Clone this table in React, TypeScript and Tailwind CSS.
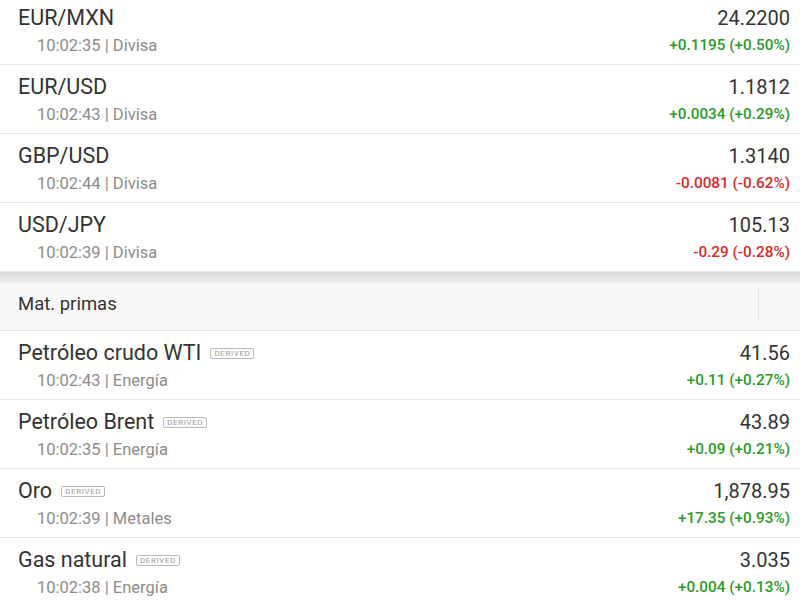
type Quote = {
  name: string;
  time: string;
  group: string;
  price: string;
  change: string;
  up: boolean;
  derived?: boolean;
};

const divisas: Quote[] = [
  { name: "EUR/MXN", time: "10:02:35", group: "Divisa", price: "24.2200", change: "+0.1195 (+0.50%)", up: true },
  { name: "EUR/USD", time: "10:02:43", group: "Divisa", price: "1.1812", change: "+0.0034 (+0.29%)", up: true },
  { name: "GBP/USD", time: "10:02:44", group: "Divisa", price: "1.3140", change: "-0.0081 (-0.62%)", up: false },
  { name: "USD/JPY", time: "10:02:39", group: "Divisa", price: "105.13", change: "-0.29 (-0.28%)", up: false },
];

const materias: Quote[] = [
  { name: "Petróleo crudo WTI", time: "10:02:43", group: "Energía", price: "41.56", change: "+0.11 (+0.27%)", up: true, derived: true },
  { name: "Petróleo Brent", time: "10:02:35", group: "Energía", price: "43.89", change: "+0.09 (+0.21%)", up: true, derived: true },
  { name: "Oro", time: "10:02:39", group: "Metales", price: "1,878.95", change: "+17.35 (+0.93%)", up: true, derived: true },
  { name: "Gas natural", time: "10:02:38", group: "Energía", price: "3.035", change: "+0.004 (+0.13%)", up: true, derived: true },
];

const QuoteRow = ({ q }: { q: Quote }) => (
  <div className="flex h-[69px] shrink-0 items-start justify-between border-b border-[#e9e9e9] bg-white pl-[18px] pr-[10px] pt-[8px]">
    <div className="flex flex-col">
      <div className="flex items-center gap-[9px]">
        <span className="text-[21.5px] leading-[28px] text-[#333333]">{q.name}</span>
        {q.derived ? (
          <span className="mt-[1px] rounded-[2px] border border-[#b8b8b8] px-[3px] text-[8px] leading-[9px] tracking-[0.6px] text-[#9a9a9a]">
            DERIVED
          </span>
        ) : null}
      </div>
      <span className="mt-[2px] pl-[19px] text-[16.5px] leading-[24px] text-[#8c8c8c]">
        {q.time} | {q.group}
      </span>
    </div>
    <div className="flex flex-col items-end">
      <span className="text-[20px] leading-[28px] text-[#333333]">{q.price}</span>
      <span className={`mt-[2px] text-[15.3px] font-medium leading-[22px] ${q.up ? "text-[#2a9a2a]" : "text-[#d42a2a]"}`}>
        {q.change}
      </span>
    </div>
  </div>
);

export default function App() {
  return (
    <div className="flex h-[600px] w-[800px] flex-col overflow-hidden bg-white font-['Roboto','Liberation_Sans',sans-serif]">
      <div className="-mt-[4px] flex flex-col">
        {divisas.map((q) => (
          <QuoteRow key={q.name} q={q} />
        ))}
      </div>
      <div className="h-[12px] shrink-0 bg-gradient-to-b from-[#d9d9d9] to-[#f1f1f1]" />
      <div className="flex h-[47px] shrink-0 items-start border-b border-[#e2e2e2] bg-[#f8f8f8] pt-[8px]">
        <span className="flex-1 pl-[18px] text-[18.5px] leading-[24px] text-[#333333]">Mat. primas</span>
        <div className="mt-[-4px] h-[32px] w-[1px] bg-[#e6e6e6]" />
        <div className="w-[41px]" />
      </div>
      <div className="flex flex-col">
        {materias.map((q) => (
          <QuoteRow key={q.name} q={q} />
        ))}
      </div>
    </div>
  );
}
